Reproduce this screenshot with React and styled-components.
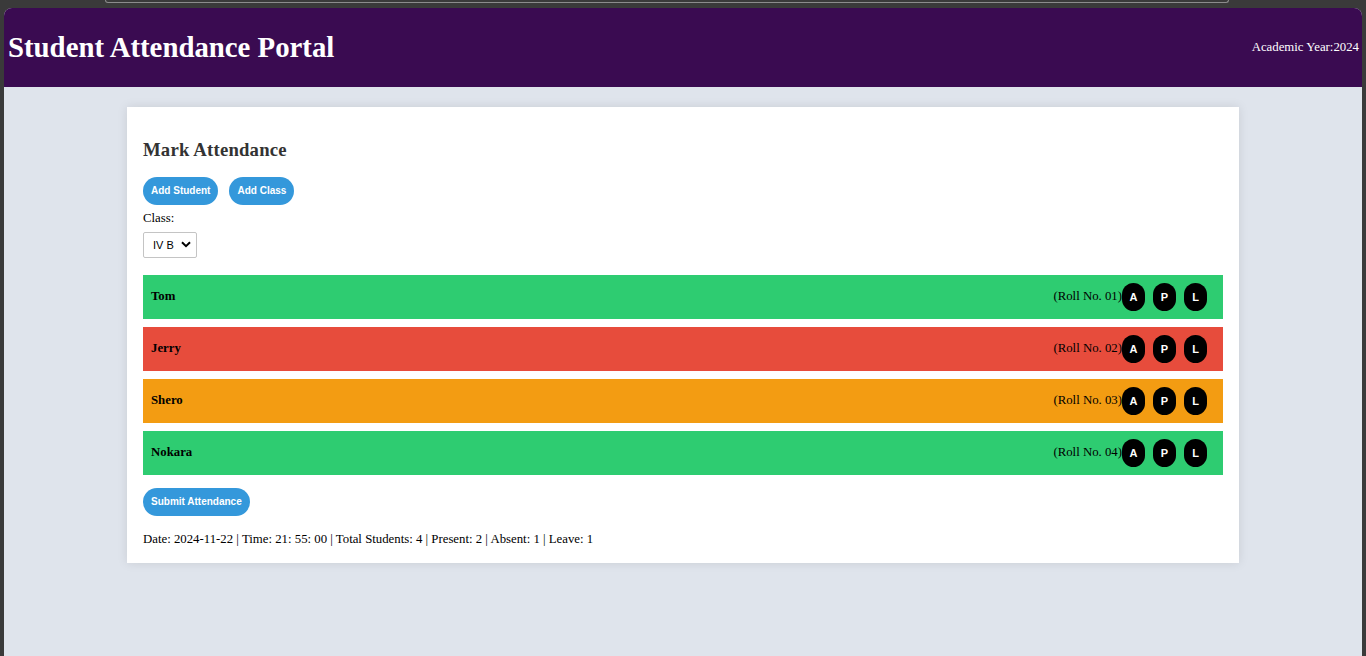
import styled, { createGlobalStyle } from "styled-components";

const Global = createGlobalStyle`
  html, body {
    margin: 0;
    padding: 0;
    height: 100%;
    background: #3a3a3a;
  }
  #root {
    height: 100%;
  }
`;

const Frame = styled.div`
  height: 100vh;
  display: flex;
  flex-direction: column;
  background: #3a3a3a;
  padding: 0 4px;
  box-sizing: border-box;
  overflow: hidden;
`;

const Chrome = styled.div`
  height: 8px;
  flex: none;
  .bar {
    margin-left: 101px;
    width: 1122px;
    height: 2px;
    border: 1px solid #8c8c8c;
    border-top: none;
    border-radius: 0 0 10px 10px;
  }
`;

const Page = styled.div`
  flex: 1;
  background: #dfe4ec;
  border-radius: 8px 8px 0 0;
  overflow: hidden;
  font-family: "Liberation Serif", "Times New Roman", serif;
  font-size: 12.8px;
  color: #000;
`;

const Header = styled.header`
  background: #3a0b51;
  color: #fff;
  display: flex;
  align-items: center;
  justify-content: space-between;
  padding: 23px 3px 23px 4px;
  h1 {
    margin: 0;
    font-size: 28.8px;
    font-weight: bold;
    line-height: 33px;
  }
  span {
    font-size: 12.8px;
  }
`;

const Card = styled.main`
  width: 1112px;
  margin: 20px auto;
  background: #fff;
  padding: 16px;
  box-sizing: border-box;
  box-shadow: 0 0 10px rgba(0, 0, 0, 0.1);
  h3 {
    margin: 16px 0;
    font-size: 18.72px;
    font-weight: bold;
    color: #333;
    line-height: 21.5px;
    letter-spacing: 0.2px;
  }
`;

const Actions = styled.div`
  display: flex;
  gap: 11px;
`;

const Pill = styled.button`
  height: 28px;
  padding: 0 8px;
  border: none;
  border-radius: 14px;
  background: #3498db;
  color: #fff;
  font-family: "Liberation Sans", Arial, sans-serif;
  font-size: 10px;
  font-weight: bold;
  cursor: pointer;
`;

const Label = styled.label`
  display: block;
  margin-top: 6px;
  line-height: 15px;
`;

const Select = styled.select`
  display: block;
  margin-top: 6px;
  width: 54px;
  height: 26px;
  padding: 0 0 0 9px;
  border: 1px solid #c4c4c4;
  border-radius: 2px;
  background: #fff
    url("data:image/svg+xml;utf8,<svg xmlns='http://www.w3.org/2000/svg' width='10' height='7' viewBox='0 0 10 7'><path d='M1 1.2l4 4 4-4' fill='none' stroke='black' stroke-width='2'/></svg>")
    no-repeat right 5px center;
  appearance: none;
  font-family: "Liberation Sans", Arial, sans-serif;
  font-size: 11px;
  color: #000;
`;

const List = styled.div`
  margin-top: 17px;
  display: flex;
  flex-direction: column;
  gap: 8px;
`;

const Row = styled.div`
  display: flex;
  align-items: center;
  height: 44px;
  padding: 0 8px;
  box-sizing: border-box;
  background: ${(p) => p.$bg};
  strong {
    flex: 1;
  }
`;

const Mark = styled.button`
  width: 23px;
  height: 28px;
  margin-right: 8px;
  padding: 0;
  border: none;
  border-radius: 12px;
  background: #000;
  color: #fff;
  font-family: "Liberation Sans", Arial, sans-serif;
  font-size: 11px;
  font-weight: bold;
`;

const Submit = styled(Pill)`
  margin-top: 13px;
  display: block;
`;

const Summary = styled.p`
  margin: 16px 0 0;
  line-height: 15px;
`;

const colors = {
  present: "#2ecc71",
  absent: "#e74c3c",
  leave: "#f39c12",
};

const students = [
  { name: "Tom", roll: "01", status: "present" },
  { name: "Jerry", roll: "02", status: "absent" },
  { name: "Shero", roll: "03", status: "leave" },
  { name: "Nokara", roll: "04", status: "present" },
];

export default function App() {
  return (
    <>
      <Global />
      <Frame>
        <Chrome>
          <div className="bar" />
        </Chrome>
        <Page>
          <Header>
            <h1>Student Attendance Portal</h1>
            <span>Academic Year:2024</span>
          </Header>
          <Card>
            <h3>Mark Attendance</h3>
            <Actions>
              <Pill>Add Student</Pill>
              <Pill>Add Class</Pill>
            </Actions>
            <Label htmlFor="cls">Class:</Label>
            <Select id="cls" defaultValue="IV B">
              <option>IV B</option>
            </Select>
            <List>
              {students.map((s) => (
                <Row key={s.roll} $bg={colors[s.status]}>
                  <strong>{s.name}</strong>
                  <span>(Roll No. {s.roll})</span>
                  <Mark>A</Mark>
                  <Mark>P</Mark>
                  <Mark>L</Mark>
                </Row>
              ))}
            </List>
            <Submit>Submit Attendance</Submit>
            <Summary>
              Date: 2024-11-22 | Time: 21: 55: 00 | Total Students: 4 | Present: 2 | Absent: 1 | Leave: 1
            </Summary>
          </Card>
        </Page>
      </Frame>
    </>
  );
}
